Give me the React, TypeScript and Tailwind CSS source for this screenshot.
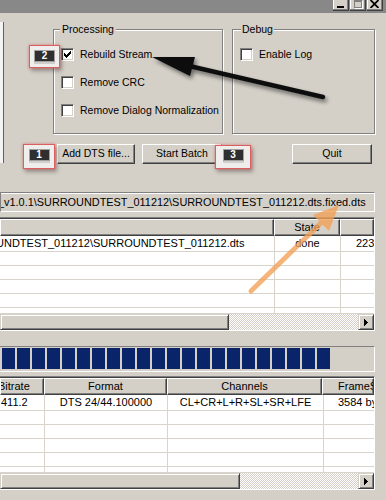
import React from "react";

const CHECK_PIXELS: [number, number][] = [
  [6, 0], [5, 1], [6, 1], [0, 2], [4, 2], [5, 2], [6, 2], [0, 3], [1, 3], [3, 3], [4, 3], [5, 3],
  [0, 4], [1, 4], [2, 4], [3, 4], [4, 4], [1, 5], [2, 5], [3, 5], [2, 6],
];

function CheckBox({ checked }: { checked?: boolean }) {
  return (
    <div className="w-[13px] h-[13px] shrink-0 bg-white border border-t-[#808080] border-l-[#808080] border-r-white border-b-white shadow-[inset_1px_1px_0_#404040,inset_-1px_-1px_0_#d4d0c8] flex items-center justify-center">
      {checked && (
        <svg width="7" height="7" viewBox="0 0 7 7" shapeRendering="crispEdges">
          {CHECK_PIXELS.map(([x, y]) => (
            <rect key={`${x}-${y}`} x={x} y={y} width="1" height="1" fill="#000" />
          ))}
        </svg>
      )}
    </div>
  );
}

function CheckRow({ label, checked }: { label: string; checked?: boolean }) {
  return (
    <div className="flex items-center gap-[6px] h-[13px] whitespace-nowrap">
      <CheckBox checked={checked} />
      <span className="text-[10.5px] leading-[13px]">{label}</span>
    </div>
  );
}

function Badge({ n, className }: { n: string; className: string }) {
  return (
    <div className={className}>
      <div className="w-[21px] h-[12px] bg-[#2f2f2f] border border-[#a0a0a0] text-white text-[10px] font-bold leading-[10px] flex items-center justify-center shadow-[0_2px_0_#d0cfcc]">
        {n}
      </div>
    </div>
  );
}

function ScrollBar({ thumb }: { thumb: string }) {
  return (
    <div className="h-[16px] flex shrink-0">
      <div className={`${thumb} h-[16px] bg-[#d4d0c8] border border-t-[#d4d0c8] border-l-[#d4d0c8] border-r-[#404040] border-b-[#404040] shadow-[inset_1px_1px_0_#fff,inset_-1px_-1px_0_#808080]`} />
      <div className="flex-1 h-[16px] bg-[repeating-conic-gradient(#ffffff_0%_25%,#d4d0c8_0%_50%)] bg-size-[2px_2px]" />
      <div className="w-[16px] h-[16px] bg-[#d4d0c8] border border-t-[#d4d0c8] border-l-[#d4d0c8] border-r-[#404040] border-b-[#404040] shadow-[inset_1px_1px_0_#fff,inset_-1px_-1px_0_#808080] flex items-center justify-center">
        <svg width="4" height="7" viewBox="0 0 4 7" shapeRendering="crispEdges">
          <path d="M0 0 L4 3.5 L0 7 Z" fill="#000" />
        </svg>
      </div>
    </div>
  );
}

const headerCell =
  "h-[17px] shrink-0 bg-[#d4d0c8] border border-t-white border-l-white border-r-[#404040] border-b-[#404040] shadow-[inset_-1px_-1px_0_#808080] flex items-center overflow-hidden whitespace-nowrap";

function List1() {
  const rows = ["h-[16px]", "h-[14px]", "h-[14px]", "h-[14px]", "h-[14px]", "h-[6px]"];
  return (
    <div className="mt-[5px] w-[375px] border-t border-r border-b border-t-[#808080] border-r-white border-b-white flex flex-col">
      <div className="h-[1px] bg-[#404040]" />
      <div className="flex">
        <div className={`${headerCell} w-[274px]`} />
        <div className={`${headerCell} w-[66px] justify-center`}>State</div>
        <div className={`${headerCell} flex-1`} />
      </div>
      <div className="h-[78px] bg-white flex flex-col overflow-hidden">
        {rows.map((h, i) => (
          <div key={i} className={`${h} shrink-0 flex border-b border-[#d8d4cc]`}>
            <div className="w-[275px] shrink-0 border-r border-[#d8d4cc] overflow-hidden whitespace-nowrap flex items-center">
              {i === 0 && <span className="ml-[-4px]">UNDTEST_011212\SURROUNDTEST_011212.dts</span>}
            </div>
            <div className="w-[66px] shrink-0 border-r border-[#d8d4cc] flex items-center justify-center">
              {i === 0 && "done"}
            </div>
            <div className="flex-1 overflow-hidden whitespace-nowrap flex items-center pl-[15px]">
              {i === 0 && "223"}
            </div>
          </div>
        ))}
      </div>
      <ScrollBar thumb="w-[229px]" />
    </div>
  );
}

function List2() {
  const rows = ["h-[16px]", "h-[14px]", "h-[14px]", "h-[14px]", "h-[14px]", "h-[6px]"];
  return (
    <div className="mt-[4px] w-[375px] border-t border-r border-b border-t-[#808080] border-r-white border-b-white flex flex-col">
      <div className="h-[1px] bg-[#404040]" />
      <div className="flex">
        <div className={`${headerCell} w-[44px]`}>
          <span className="ml-[-3px]">Bitrate</span>
        </div>
        <div className={`${headerCell} w-[123px] justify-center`}>Format</div>
        <div className={`${headerCell} w-[155px] justify-center`}>Channels</div>
        <div className={`${headerCell} flex-1 pl-[15px]`}>FrameSize</div>
      </div>
      <div className="h-[78px] bg-white flex flex-col overflow-hidden">
        {rows.map((h, i) => (
          <div key={i} className={`${h} shrink-0 flex border-b border-[#d8d4cc]`}>
            <div className="w-[45px] shrink-0 border-r border-[#d8d4cc] flex items-center pl-[1px] whitespace-nowrap overflow-hidden">
              {i === 0 && "411.2"}
            </div>
            <div className="w-[123px] shrink-0 border-r border-[#d8d4cc] flex items-center justify-center whitespace-nowrap">
              {i === 0 && "DTS 24/44.100000"}
            </div>
            <div className="w-[156px] shrink-0 border-r border-[#d8d4cc] flex items-center justify-center whitespace-nowrap">
              {i === 0 && "CL+CR+L+R+SL+SR+LFE"}
            </div>
            <div className="flex-1 overflow-hidden whitespace-nowrap flex items-center pl-[14px]">
              {i === 0 && "3584 bytes"}
            </div>
          </div>
        ))}
      </div>
      <ScrollBar thumb="w-[240px]" />
    </div>
  );
}

const btn =
  "h-[20px] shrink-0 bg-[#d4d0c8] border border-t-white border-l-white border-r-[#404040] border-b-[#404040] shadow-[inset_-1px_-1px_0_#808080] flex items-center justify-center text-[10.5px] whitespace-nowrap";

export default function App() {
  const blocks = Array.from({ length: 22 });
  return (
    <div className="relative w-[386px] h-[500px] overflow-hidden bg-[#d4d0c8] text-black text-[11px] font-['Liberation_Sans',Arial,sans-serif]">
      {/* title bar */}
      <div className="h-[13px] bg-[#888888] flex justify-end items-start pr-[3px]">
        <div className="w-[16px] h-[11px] bg-[#d4d0c8] border-r border-b border-[#404040] shadow-[inset_-1px_-1px_0_#808080,inset_1px_0_0_#fff] flex items-end pl-[4px] pb-[2px]">
          <div className="w-[7px] h-[2px] bg-black" />
        </div>
        <div className="ml-[1px] w-[16px] h-[11px] bg-[#d4d0c8] border-r border-b border-[#404040] shadow-[inset_-1px_-1px_0_#808080,inset_1px_0_0_#fff] flex items-end pl-[4px] pb-[2px]">
          <div className="w-[8px] h-[8px] border border-t-2 border-[#808080] shadow-[1px_1px_0_#fff]" />
        </div>
        <div className="ml-[1px] w-[16px] h-[11px] bg-[#d4d0c8] border-r border-b border-[#404040] shadow-[inset_-1px_-1px_0_#808080,inset_1px_0_0_#fff] flex items-end justify-center pb-[2px]">
          <svg width="9" height="8" viewBox="0 0 9 8">
            <path d="M0.5 0 L8.5 8 M8.5 0 L0.5 8" stroke="#000" strokeWidth="1.8" />
          </svg>
        </div>
      </div>

      {/* top area */}
      <div className="flex">
        <div className="mt-[9px] w-[4px] h-[141px] bg-[#f4f4f4] border-r border-[#606060]" />
        <div className="flex flex-col">
          <div className="flex mt-[16px] ml-[49px]">
            <div className="relative w-[170px] h-[105px] border border-[#808080] shadow-[inset_1px_1px_0_#fff,1px_1px_0_#fff] pt-[18px] pl-[7px] flex flex-col gap-[15px]">
              <span className="absolute left-[6px] -top-[8px] px-[2px] bg-[#d4d0c8] text-[10.5px] leading-[14px]">Processing</span>
              <CheckRow label="Rebuild Stream" checked />
              <CheckRow label="Remove CRC" />
              <CheckRow label="Remove Dialog Normalization" />
            </div>
            <div className="relative ml-[9px] w-[143px] h-[105px] border border-[#808080] shadow-[inset_1px_1px_0_#fff,1px_1px_0_#fff] pt-[18px] pl-[7px] flex flex-col">
              <span className="absolute left-[8px] -top-[8px] px-[1px] bg-[#d4d0c8] text-[10.5px] leading-[14px]">Debug</span>
              <CheckRow label="Enable Log" />
            </div>
          </div>
          <div className="flex mt-[10px] ml-[53px]">
            <div className={`${btn} w-[78px]`}>Add DTS file...</div>
            <div className={`${btn} w-[80px] ml-[7px]`}>Start Batch</div>
            <div className={`${btn} w-[80px] ml-[70px]`}>Quit</div>
          </div>
        </div>
      </div>

      {/* path field */}
      <div className="mt-[28px] w-[375px] h-[20px] border border-t-[#808080] border-l-[#808080] border-r-white border-b-white shadow-[inset_0_1px_0_#fff] flex items-center overflow-hidden whitespace-nowrap">
        <span className="ml-[-3px] text-[10.9px]">_v1.0.1\SURROUNDTEST_011212\SURROUNDTEST_011212.dts.fixed.dts</span>
      </div>

      <List1 />

      {/* progress */}
      <div className="mt-[15px] w-[375px] h-[26px] border-t border-r border-b border-t-[#808080] border-r-white border-b-white flex items-start gap-[2px] pt-[1px] pl-[2px]">
        {blocks.map((_, i) => (
          <div key={i} className="w-[13px] h-[21px] shrink-0 bg-[#0a246a]" />
        ))}
      </div>

      <List2 />

      {/* badges */}
      <Badge n="2" className="absolute left-[29px] top-[45px] w-[31px] h-[23px] border border-[#d9605f] bg-[#efeeec] shadow-[0_0_3px_rgba(220,80,80,0.6),2px_3px_4px_rgba(0,0,0,0.3)] flex items-start justify-center pt-[4px]" />
      <Badge n="1" className="absolute left-[23px] top-[144px] w-[32px] h-[25px] border border-[#d9605f] bg-[#efeeec] shadow-[0_0_3px_rgba(220,80,80,0.6),2px_3px_4px_rgba(0,0,0,0.3)] flex items-start justify-center pt-[4px]" />
      <Badge n="3" className="absolute left-[215px] top-[145px] w-[36px] h-[24px] border border-[#d9605f] bg-[#efeeec] shadow-[0_0_3px_rgba(220,80,80,0.6),2px_3px_4px_rgba(0,0,0,0.3)] flex items-start justify-center pt-[3px]" />

      {/* arrows */}
      <svg className="absolute left-0 top-0 pointer-events-none" width="386" height="500" viewBox="0 0 386 500">
        <defs>
          <filter id="shadow" x="-20%" y="-40%" width="140%" height="180%">
            <feGaussianBlur in="SourceAlpha" stdDeviation="2" />
            <feOffset dx="2" dy="3" result="o" />
            <feComponentTransfer>
              <feFuncA type="linear" slope="0.5" />
            </feComponentTransfer>
            <feMerge>
              <feMergeNode />
              <feMergeNode in="SourceGraphic" />
            </feMerge>
          </filter>
          <filter id="soft" x="-20%" y="-20%" width="140%" height="140%">
            <feGaussianBlur stdDeviation="0.7" />
          </filter>
        </defs>
        <g filter="url(#shadow)">
          <line x1="323" y1="97" x2="185" y2="65" stroke="#111" strokeWidth="4.5" strokeLinecap="round" />
          <polygon points="152,57 195,57 190,76" fill="#111" />
        </g>
        <g filter="url(#soft)" opacity="0.78">
          <line x1="251" y1="291" x2="322" y2="222" stroke="#f3a157" strokeWidth="5" strokeLinecap="round" />
          <polygon points="339,205 329,231 313,215" fill="#f3a157" />
        </g>
      </svg>
    </div>
  );
}
